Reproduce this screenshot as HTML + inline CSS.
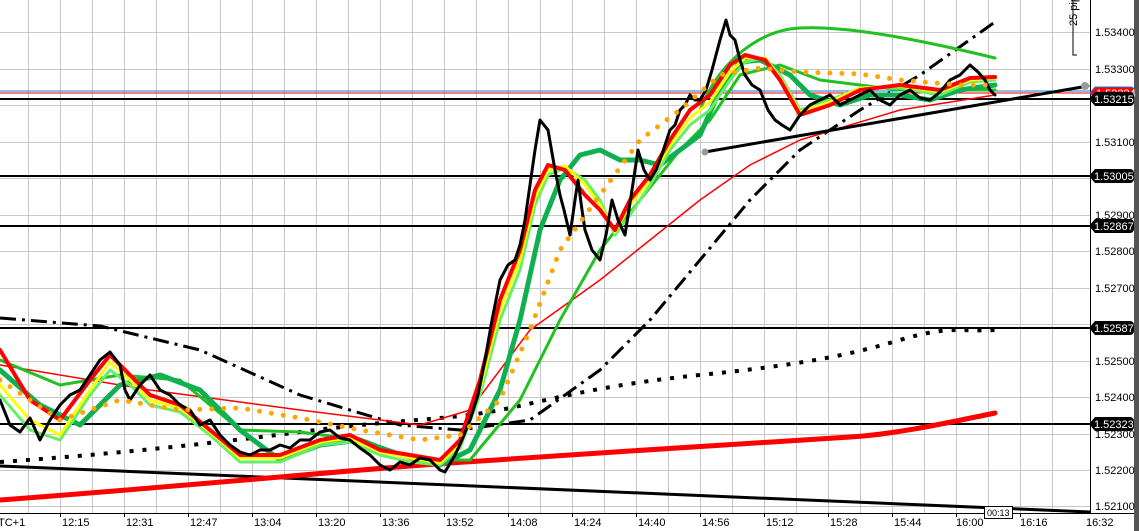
<!DOCTYPE html>
<html><head><meta charset="utf-8"><style>
html,body{margin:0;padding:0;background:#fff;width:1139px;height:531px;overflow:hidden}
svg{display:block;font-family:"Liberation Sans",sans-serif}
</style></head><body>
<svg width="1139" height="531" viewBox="0 0 1139 531" xmlns="http://www.w3.org/2000/svg">
<rect width="1139" height="531" fill="#fff"/>
<g stroke="#c8c8c8" stroke-width="1">
<path d="M28.5 0V513M60.5 0V513M92.5 0V513M124.5 0V513M156.5 0V513M188.5 0V513M220.5 0V513M252.5 0V513M284.5 0V513M316.5 0V513M348.5 0V513M380.5 0V513M412.5 0V513M444.5 0V513M476.5 0V513M508.5 0V513M540.5 0V513M572.5 0V513M604.5 0V513M636.5 0V513M668.5 0V513M700.5 0V513M732.5 0V513M764.5 0V513M796.5 0V513M828.5 0V513M860.5 0V513M892.5 0V513M924.5 0V513M956.5 0V513M988.5 0V513M1020.5 0V513M1052.5 0V513"/>
<path d="M0 32.5H1090M0 69.5H1090M0 105.5H1090M0 142.5H1090M0 178.5H1090M0 215.5H1090M0 251.5H1090M0 288.5H1090M0 324.5H1090M0 361.5H1090M0 397.5H1090M0 434.5H1090M0 470.5H1090M0 506.5H1090"/>
</g>
<line x1="0" y1="91" x2="1090" y2="91" stroke="#1e78d0" stroke-width="1"/>
<line x1="0" y1="93" x2="1090" y2="93" stroke="#ff0000" stroke-width="1"/>
<g stroke="#000" stroke-width="2">
<line x1="0" y1="99" x2="1090" y2="99"/>
<line x1="0" y1="176" x2="1090" y2="176"/>
<line x1="0" y1="226" x2="1090" y2="226"/>
<line x1="0" y1="328" x2="1090" y2="328"/>
<line x1="0" y1="424" x2="1090" y2="424"/>
</g>
<g fill="none" stroke-linejoin="round" stroke-linecap="round">
<path d="M0 466L1090 512" stroke="#000" stroke-width="3"/>
<path d="M0 500C200 485 350 470 450 463S800 440 850 437S960 420 995 413" stroke="#ff0000" stroke-width="5"/>
<path d="M0 462C100 455 200 445 300 432S450 420 500 410S600 385 700 375S850 355 900 340S960 332 995 330" stroke="#000" stroke-width="4" stroke-dasharray="4 9" stroke-linecap="butt"/>
<path d="M0 318L100 326L200 350L300 395L400 425L460 430L530 420L600 370L650 320L700 260L750 200L800 150L860 110L920 75L995 22" stroke="#000" stroke-width="3" stroke-dasharray="16 6 3 6" stroke-linecap="butt"/>
<path d="M0 365L150 390L300 410L420 425L470 410L530 330L600 280L650 240L700 200L750 165L800 140L900 110L995 95" stroke="#ff0000" stroke-width="1.5"/>
<path d="M700 110C720 60 760 30 800 28S900 35 995 58" stroke="#22c022" stroke-width="3"/>
<path d="M0 360L60 385L120 375L180 380L240 430L300 432L360 440L420 460L470 460L520 400L560 320L600 250L640 200L680 150L710 120L740 75L780 65L820 80L860 85L900 90L995 90" stroke="#22c022" stroke-width="3"/>
<path d="M0 370L40 405L80 425L120 385L160 375L200 390L240 430L280 460L320 445L360 440L400 455L440 465L470 450L500 390L520 320L540 230L560 180L580 155L600 150L620 160L640 160L660 165L680 150L700 135L720 90L740 62L760 60L790 75L810 95L840 105L870 95L900 95L930 100L960 90L995 85" stroke="#10b050" stroke-width="5"/>
<path d="M0 395L30 430L60 440L90 395L110 370L130 385L150 405L180 412L210 435L240 462L280 462L320 445L350 442L380 455L410 462L440 465L460 448L480 395L500 320L520 270L535 205L548 175L565 168L585 180L600 200L615 235L630 215L650 185L670 150L690 125L710 110L730 80L745 62L765 58L780 75L800 110L830 100L860 88L900 88L940 95L970 82L995 80" stroke="#66ee66" stroke-width="3"/>
<path d="M0 385L30 420L60 435L90 390L110 362L130 380L150 400L180 408L210 432L240 458L280 458L320 442L350 438L380 452L410 458L440 463L460 444L480 388L500 310L520 260L535 198L548 170L565 166L585 185L600 205L615 232L630 205L650 180L670 145L690 118L710 102L730 72L745 58L765 58L780 78L800 112L830 102L860 88L900 86L940 92L970 80L995 78" stroke="#ffff00" stroke-width="3"/>
<path d="M0 350L30 400L60 420L90 380L110 355L130 375L150 395L180 405L210 430L240 455L280 455L320 440L350 435L380 450L410 455L440 460L460 440L480 380L500 300L520 250L535 190L548 165L565 170L585 195L600 210L615 230L630 200L650 175L670 140L690 110L710 95L730 65L745 55L765 60L780 80L800 115L830 105L860 90L900 85L940 90L970 78L995 77" stroke="#ff0000" stroke-width="4"/>
<path d="M0 400L10 425L20 432L30 418L40 440L50 420L60 405L70 395L80 390L90 375L100 360L110 352L120 365L125 390L130 400L140 385L150 375L160 390L170 395L180 405L190 410L200 425L210 420L220 435L230 445L240 452L250 455L260 450L270 450L280 445L290 448L300 440L310 440L320 432L330 430L340 438L350 440L360 448L370 455L380 465L390 470L400 462L410 465L420 458L430 460L440 470L445 472L455 455L462 440L470 420L478 395L485 360L492 320L500 280L508 265L515 260L520 245L525 220L530 185L535 150L540 120L548 130L555 170L560 195L564 210L570 235L575 200L578 180L582 210L585 230L592 250L600 260L606 235L612 200L618 220L625 235L632 190L638 150L644 170L650 180L656 170L660 160L665 145L670 130L675 125L680 110L685 105L690 95L695 100L700 100L706 90L712 70L716 55L720 40L726 20L730 35L735 40L740 60L745 75L752 85L760 90L768 110L775 120L782 125L790 130L800 115L810 105L820 100L830 95L840 105L850 100L860 95L870 90L880 100L890 105L900 95L910 90L920 98L930 100L940 92L950 80L960 75L970 65L978 72L985 80L990 90L995 95" stroke="#000" stroke-width="3"/>
<path d="M0 380L60 420L120 400L180 410L240 408L300 418L360 430L420 440L460 435L500 400L530 330L560 250L600 195L640 140L680 110L720 75L760 68L800 72L860 74L900 80L960 85L995 85" stroke="#ffa500" stroke-width="5" stroke-dasharray="0 12"/>
<path d="M705 152L1088 86" stroke="#000" stroke-width="3"/>
</g>
<circle cx="705" cy="152" r="3.5" fill="#999"/>
<circle cx="1085" cy="86" r="4" fill="#999"/>
<rect x="1090" y="0" width="49" height="531" fill="#fff"/>
<line x1="1090.5" y1="0" x2="1090.5" y2="513" stroke="#000"/>
<line x1="0" y1="513.5" x2="1139" y2="513.5" stroke="#000"/>
<rect x="1134" y="0" width="5" height="531" fill="#555"/>
<g font-size="11" fill="#000">
<text x="1095" y="36">1.53400</text>
<text x="1095" y="73">1.53300</text>
<text x="1095" y="146">1.53100</text>
<text x="1095" y="219">1.52900</text>
<text x="1095" y="255">1.52800</text>
<text x="1095" y="292">1.52700</text>
<text x="1095" y="365">1.52500</text>
<text x="1095" y="401">1.52400</text>
<text x="1095" y="438">1.52300</text>
<text x="1095" y="474">1.52200</text>
<text x="1095" y="510">1.52100</text>
</g>
<g font-size="11" fill="#fff">
<path d="M1090 93l5-6h36a3 3 0 0 1 3 3v6a3 3 0 0 1-3 3h-36z" fill="#ff0000" stroke="#1e78d0"/>
<text x="1096" y="97" fill="#fff">1.53224</text>
<path d="M1089 99l6-7h35a4 4 0 0 1 4 4v6a4 4 0 0 1-4 4h-35z" fill="#000"/><text x="1094" y="103">1.53215</text>
<path d="M1089 176l6-7h35a4 4 0 0 1 4 4v6a4 4 0 0 1-4 4h-35z" fill="#000"/><text x="1094" y="180">1.53005</text>
<path d="M1089 226l6-7h35a4 4 0 0 1 4 4v6a4 4 0 0 1-4 4h-35z" fill="#000"/><text x="1094" y="230">1.52867</text>
<path d="M1089 328l6-7h35a4 4 0 0 1 4 4v6a4 4 0 0 1-4 4h-35z" fill="#000"/><text x="1094" y="332">1.52587</text>
<path d="M1089 424l6-7h35a4 4 0 0 1 4 4v6a4 4 0 0 1-4 4h-35z" fill="#000"/><text x="1094" y="428">1.52323</text>
</g>
<path d="M1073 0V55H1077" fill="none" stroke="#000"/>
<text transform="translate(1077,26) rotate(-90)" font-size="11" fill="#000">25 pips</text>
<g font-size="11" fill="#000">
<text x="-2" y="526">TC+1</text>
<text x="62" y="526">12:15</text><text x="126" y="526">12:31</text><text x="190" y="526">12:47</text>
<text x="254" y="526">13:04</text><text x="318" y="526">13:20</text><text x="382" y="526">13:36</text>
<text x="446" y="526">13:52</text><text x="510" y="526">14:08</text><text x="574" y="526">14:24</text>
<text x="638" y="526">14:40</text><text x="702" y="526">14:56</text><text x="766" y="526">15:12</text>
<text x="830" y="526">15:28</text><text x="894" y="526">15:44</text><text x="956" y="526">16:00</text>
<text x="1020" y="526">16:16</text><text x="1086" y="526">16:32</text>
</g>
<g stroke="#000"><path d="M60.5 513v4M124.5 513v4M188.5 513v4M252.5 513v4M316.5 513v4M380.5 513v4M444.5 513v4M508.5 513v4M572.5 513v4M636.5 513v4M700.5 513v4M764.5 513v4M828.5 513v4M892.5 513v4M956.5 513v4M1020.5 513v4"/></g>
<rect x="984.5" y="506.5" width="28" height="12" fill="#fff" stroke="#000"/>
<text x="987" y="516" font-size="9" fill="#000">00:13</text>
</svg>
</body></html>
